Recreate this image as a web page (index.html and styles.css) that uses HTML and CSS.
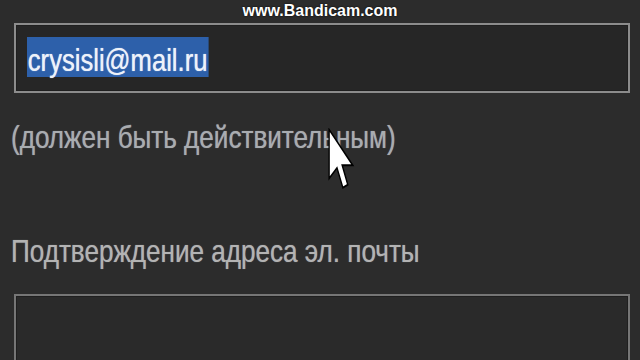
FILE: index.html
```html
<!DOCTYPE html>
<html lang="ru">
<head>
  <meta charset="UTF-8" />
  <meta name="viewport" content="width=device-width, initial-scale=1" />
  <title>Регистрация</title>
  <link rel="stylesheet" href="styles.css">
</head>
<body>
  <div class="watermark">www.Bandicam.com</div>

  <div class="form">
    <div class="field focused">
      <span class="selected"><span class="narrow">crysisli@mail.ru</span></span>
    </div>
    <p class="hint"><span class="narrow">(должен быть действительным)</span></p>

    <p class="label"><span class="narrow">Подтверждение адреса эл. почты</span></p>
    <div class="field"></div>
  </div>

  <svg class="cursor" viewBox="0 0 12 19" preserveAspectRatio="none" width="27" height="62">
    <path d="M0.5 0.5 L0.5 15.5 L4 12.2 L6.6 18.3 L8.8 17.4 L6.3 11.4 L11 11.4 Z" fill="#fff" stroke="#000" stroke-width="0.6" stroke-linejoin="miter"/>
  </svg>
</body>
</html>
```

FILE: styles.css
```css
/* dark page, stretched capture */
body, html {
  margin: 0;
  height: 100%;
  overflow: hidden;
  background: #2c2c2c;
  font-family: "Liberation Sans", Arial, sans-serif;
}
.form {
  padding: 23px 10px 0 14px;
}
.field {
  height: 66px;
  border: 2px solid #767676;
  background: #2a2a2a;
  box-shadow: inset 0 0 0 1px #1f1f1f;
  padding-left: 11px;
}
.field.focused {
  border-color: #8c8c8c;
  background: #262626;
}
.selected {
  display: inline-block;
  margin-top: 12px;
  height: 40px;
  padding-top: 7px;
  box-sizing: border-box;
  font-size: 32px;
  line-height: 32px;
  color: #eef2f8;
}
.selected .narrow {
  background: #2d60aa;
  padding: 7px 2px 0 1px;
  margin-top: -7px;
  height: 40px;
  box-sizing: border-box;
  text-shadow: 0 0 1px #cfe0ff;
}
.narrow {
  display: inline-block;
  transform: scaleX(0.8);
  transform-origin: 0 0;
  white-space: nowrap;
}
.hint, .label {
  margin: 0 0 0 -3px;
  font-size: 32px;
  line-height: 40px;
  color: #a9acb0;
  text-shadow: 0 0 1px #8a8d92;
}
.hint .narrow, .label .narrow {
  transform: scaleX(0.815);
}
.hint {
  margin-top: 24px;
}
.label {
  margin-top: 74px;
  margin-bottom: 23px;
  color: #b3b3b3;
}
.watermark {
  position: absolute;
  top: 0;
  left: 0;
  right: 0;
  text-align: center;
  font-weight: bold;
  font-size: 16px;
  line-height: 22px;
  color: #fff;
  text-shadow: 0 0 2px #000;
}
.cursor {
  position: absolute;
  left: 328px;
  top: 128px;
}
```
